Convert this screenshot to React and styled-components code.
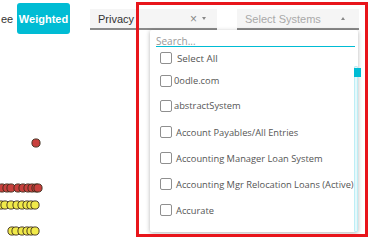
import React from "react";
import styled, { createGlobalStyle } from "styled-components";

const Global = createGlobalStyle`
  html, body { margin: 0; padding: 0; background: #fff; }
  body { width: 370px; height: 242px; overflow: hidden; font-family: "Liberation Sans", Arial, sans-serif; }
`;

const Page = styled.div`
  position: relative;
  width: 370px;
  height: 242px;
  overflow: hidden;
`;

const Toolbar = styled.div`
  display: flex;
  align-items: center;
  height: 38px;
`;

const CutLabel = styled.span`
  font-size: 11px;
  color: #333;
  width: 16px;
  padding-left: 1px;
  overflow: hidden;
`;

const ToggleButton = styled.button`
  width: 53px;
  height: 31px;
  margin-top: -1px;
  border: none;
  border-radius: 3px;
  background: #00bcd4;
  color: #fff;
  font-family: "Liberation Sans", Arial, sans-serif;
  font-size: 11px;
  font-weight: bold;
  padding: 0;
`;

const Select = styled.div`
  display: flex;
  align-items: center;
  box-sizing: border-box;
  width: ${({ w }) => w}px;
  height: 21px;
  margin-left: ${({ ml }) => ml}px;
  margin-top: 1px;
  padding: 0 8px;
  background: #f5f5f5;
  border-bottom: 2px solid #8a8a8a;
  font-size: 11px;
  color: ${({ muted }) => (muted ? "#a9a9a9" : "#333")};
`;

const SelectText = styled.span`
  flex: 1;
`;

const Clear = styled.span`
  color: #888;
  font-size: 12px;
  margin-right: 5px;
`;

const Caret = styled.span`
  width: 0;
  height: 0;
  border-left: 2.5px solid transparent;
  border-right: 2.5px solid transparent;
  border-${({ up }) => (up ? "bottom" : "top")}: 3px solid #888;
  margin-right: ${({ mr }) => mr || 0}px;
`;

const Chart = styled.svg`
  display: block;
`;

const Menu = styled.div`
  position: absolute;
  left: 150px;
  top: 30px;
  width: 208px;
  height: 202px;
  background: #fff;
  box-shadow: 0 1px 4px rgba(0, 0, 0, 0.3);
  border-radius: 2px;
  font-family: "Open Sans", sans-serif;
  display: flex;
  flex-direction: column;
`;

const Search = styled.div`
  margin: 6px 3px 0 6px;
  height: 10px;
  border-bottom: 1px solid #00bcd4;
  font-size: 10px;
  line-height: 10px;
  color: #999;
`;

const ListWrap = styled.div`
  display: flex;
  flex: 1;
  min-height: 0;
`;

const List = styled.div`
  flex: 1;
  padding: 0 0 0 10px;
  white-space: nowrap;
`;

const Row = styled.div`
  display: flex;
  align-items: center;
  height: ${({ h }) => h || 26}px;
  font-size: ${({ fs }) => fs || 9.3}px;
  color: #555;
`;

const Box = styled.span`
  box-sizing: border-box;
  width: 12px;
  height: 12px;
  border: 1px solid #8f8f8f;
  border-radius: 2px;
  margin-right: ${({ gap }) => gap}px;
  flex-shrink: 0;
`;

const Track = styled.div`
  position: relative;
  width: 5px;
  margin: 19px 0 0;
  background: #e6f8fb;
  border: 1px solid #bdeef5;
  border-radius: 1px;
`;

const Thumb = styled.div`
  position: absolute;
  left: -1px;
  top: 1px;
  width: 7px;
  height: 9px;
  background: #00bcd4;
`;

const Highlight = styled.div`
  position: absolute;
  left: 136px;
  top: 2px;
  width: 232px;
  height: 235px;
  box-sizing: border-box;
  border: 3px solid #e8151b;
  pointer-events: none;
`;

const items = [
  { label: "Select All", gap: 5, h: 22, fs: 9.8 },
  { label: "0odle.com", gap: 2, h: 23 },
  { label: "abstractSystem", gap: 2, h: 27 },
  { label: "Account Payables/All Entries", gap: 4 },
  { label: "Accounting Manager Loan System", gap: 4 },
  { label: "Accounting Mgr Relocation Loans (Active)", gap: 4 },
  { label: "Accurate", gap: 4 },
];

const dot = (cx, cy, fill) => (
  <circle key={`${cx}-${cy}`} cx={cx} cy={cy} r="4.1" fill={fill} stroke="#3a2a1a" strokeWidth="0.9" />
);

function Dots() {
  const redRow = [2, 7, 11, 18, 23, 28, 32, 36, 38];
  const yellowRow = [1, 5, 11, 17, 22, 27, 31, 35];
  const yellowRow2 = [12, 16, 22, 27, 31, 35];
  return (
    <Chart width="60" height="204" viewBox="0 0 60 204">
      {dot(36, 105, "#c8403d")}
      {redRow.map((x) => dot(x, 150, "#c8403d"))}
      {yellowRow.map((x) => dot(x, 167, "#f1ea4a"))}
      {yellowRow2.map((x) => dot(x, 193, "#f1ea4a"))}
    </Chart>
  );
}

export default function App() {
  return (
    <Page>
      <Global />
      <Toolbar>
        <CutLabel>ee</CutLabel>
        <ToggleButton>Weighted</ToggleButton>
        <Select w={127} ml={20}>
          <SelectText>Privacy</SelectText>
          <Clear>×</Clear>
          <Caret mr={3} />
        </Select>
        <Select w={122} ml={20} muted>
          <SelectText>Select Systems</SelectText>
          <Caret up mr={6} />
        </Select>
      </Toolbar>
      <Dots />
      <Menu>
        <Search>Search...</Search>
        <ListWrap>
          <List>
            {items.map((it) => (
              <Row key={it.label} h={it.h} fs={it.fs}>
                <Box gap={it.gap} />
                {it.label}
              </Row>
            ))}
          </List>
          <Track>
            <Thumb />
          </Track>
        </ListWrap>
      </Menu>
      <Highlight />
    </Page>
  );
}
